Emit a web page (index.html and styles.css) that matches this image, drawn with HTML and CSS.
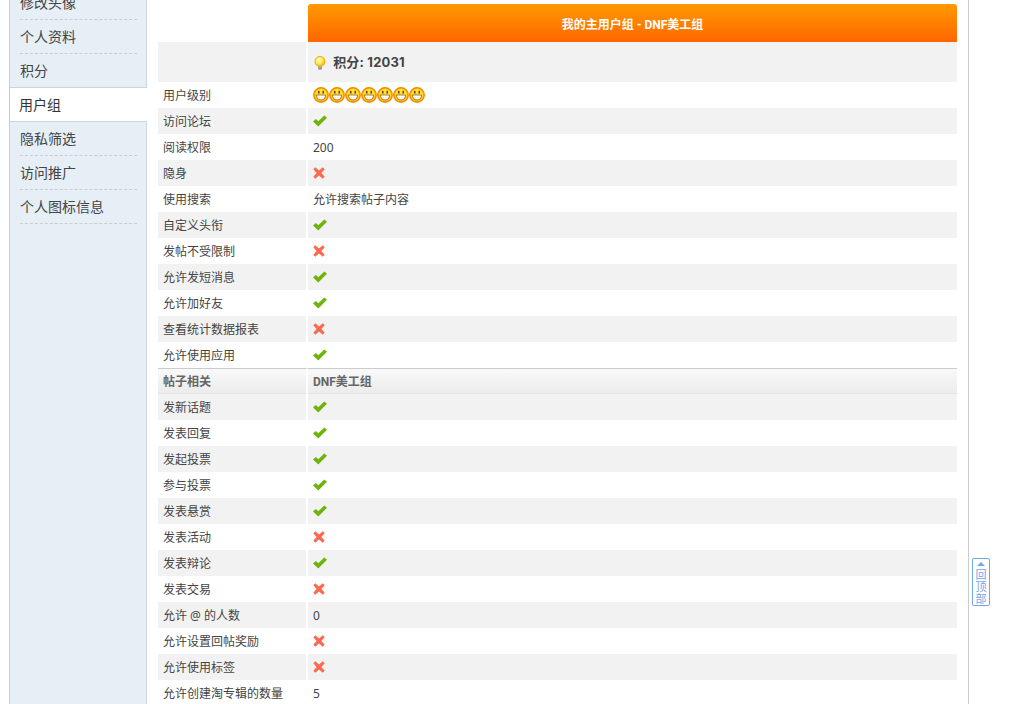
FILE: index.html
```html
<!DOCTYPE html>
<html>
<head>
<meta charset="utf-8">
<title>用户组</title>
<link rel="stylesheet" href="styles.css">
</head>
<body>

<svg class="defs" width="0" height="0">
	<defs>
		<radialGradient id="face" cx="50%" cy="45%" r="55%">
			<stop offset="0.6" stop-color="#ffe23a"/>
			<stop offset="1" stop-color="#ffb000"/>
		</radialGradient>
		<radialGradient id="lamp" cx="40%" cy="35%" r="65%">
			<stop offset="0" stop-color="#fffbd0"/>
			<stop offset="0.6" stop-color="#ffe640"/>
			<stop offset="1" stop-color="#f5b400"/>
		</radialGradient>
		<symbol id="yes" viewBox="0 0 14 12">
			<path d="M0 6.5 L2.8 4 L5.3 6.3 L11.3 0.5 L14 2.8 L5.3 11.5 Z" fill="#6fb30c"/>
		</symbol>
		<symbol id="no" viewBox="0 0 12 12">
			<path d="M2.3 0.3 L6 3.6 L9.7 0.3 L11.7 2.3 L8.4 6 L11.7 9.7 L9.7 11.7 L6 8.4 L2.3 11.7 L0.3 9.7 L3.6 6 L0.3 2.3 Z" fill="#fb6a50"/>
		</symbol>
		<symbol id="smile" viewBox="0 0 16 16">
			<circle cx="8" cy="8" r="7.2" fill="url(#face)" stroke="#f78a00" stroke-width="1.5"/>
			<rect x="5" y="3.8" width="1.5" height="2.8" fill="#6b4200"/>
			<rect x="9.5" y="3.8" width="1.5" height="2.8" fill="#6b4200"/>
			<path d="M3.4 8 H12.6 Q12.2 13 8 13 Q3.8 13 3.4 8 Z" fill="#fff" stroke="#9a6000" stroke-width="0.8"/>
		</symbol>
	</defs>
</svg>

<div class="wrap">
	<div class="side">
		<ul>
			<li>修改头像</li>
			<li>个人资料</li>
			<li class="before-active">积分</li>
			<li class="active">用户组</li>
			<li>隐私筛选</li>
			<li>访问推广</li>
			<li>个人图标信息</li>
		</ul>
	</div>

	<div class="main">
		<div class="title-row">
			<div class="title">我的主用户组 - DNF美工组</div>
		</div>
		<table class="perm">
			<tr class="gray score">
				<td></td>
				<td>
					<svg class="bulb" width="14" height="15" viewBox="0 0 14 15">
						<circle cx="7" cy="5.5" r="5" fill="url(#lamp)" stroke="#e3ad10"/>
						<path d="M5 10.5 H9 V13 Q7 14.8 5 13 Z" fill="#a0a0a0"/>
					</svg>
					<b>积分: 12031</b>
				</td>
			</tr>
			<tr>
				<td>用户级别</td>
				<td class="stars">
					<svg width="16" height="16"><use href="#smile"/></svg><svg width="16" height="16"><use href="#smile"/></svg><svg width="16" height="16"><use href="#smile"/></svg><svg width="16" height="16"><use href="#smile"/></svg><svg width="16" height="16"><use href="#smile"/></svg><svg width="16" height="16"><use href="#smile"/></svg><svg width="16" height="16"><use href="#smile"/></svg>
				</td>
			</tr>
			<tr class="gray"><td>访问论坛</td><td><svg class="ico" width="14" height="12"><use href="#yes"/></svg></td></tr>
			<tr><td>阅读权限</td><td>200</td></tr>
			<tr class="gray"><td>隐身</td><td><svg class="ico" width="12" height="12"><use href="#no"/></svg></td></tr>
			<tr><td>使用搜索</td><td>允许搜索帖子内容</td></tr>
			<tr class="gray"><td>自定义头衔</td><td><svg class="ico" width="14" height="12"><use href="#yes"/></svg></td></tr>
			<tr><td>发帖不受限制</td><td><svg class="ico" width="12" height="12"><use href="#no"/></svg></td></tr>
			<tr class="gray"><td>允许发短消息</td><td><svg class="ico" width="14" height="12"><use href="#yes"/></svg></td></tr>
			<tr><td>允许加好友</td><td><svg class="ico" width="14" height="12"><use href="#yes"/></svg></td></tr>
			<tr class="gray"><td>查看统计数据报表</td><td><svg class="ico" width="12" height="12"><use href="#no"/></svg></td></tr>
			<tr><td>允许使用应用</td><td><svg class="ico" width="14" height="12"><use href="#yes"/></svg></td></tr>
			<tr class="section"><td>帖子相关</td><td>DNF美工组</td></tr>
			<tr class="gray"><td>发新话题</td><td><svg class="ico" width="14" height="12"><use href="#yes"/></svg></td></tr>
			<tr><td>发表回复</td><td><svg class="ico" width="14" height="12"><use href="#yes"/></svg></td></tr>
			<tr class="gray"><td>发起投票</td><td><svg class="ico" width="14" height="12"><use href="#yes"/></svg></td></tr>
			<tr><td>参与投票</td><td><svg class="ico" width="14" height="12"><use href="#yes"/></svg></td></tr>
			<tr class="gray"><td>发表悬赏</td><td><svg class="ico" width="14" height="12"><use href="#yes"/></svg></td></tr>
			<tr><td>发表活动</td><td><svg class="ico" width="12" height="12"><use href="#no"/></svg></td></tr>
			<tr class="gray"><td>发表辩论</td><td><svg class="ico" width="14" height="12"><use href="#yes"/></svg></td></tr>
			<tr><td>发表交易</td><td><svg class="ico" width="12" height="12"><use href="#no"/></svg></td></tr>
			<tr class="gray"><td>允许 @ 的人数</td><td>0</td></tr>
			<tr><td>允许设置回帖奖励</td><td><svg class="ico" width="12" height="12"><use href="#no"/></svg></td></tr>
			<tr class="gray"><td>允许使用标签</td><td><svg class="ico" width="12" height="12"><use href="#no"/></svg></td></tr>
			<tr><td>允许创建淘专辑的数量</td><td>5</td></tr>
		</table>
	</div>
</div>

<a class="totop" href="#"><i></i>回顶部</a>

</body>
</html>
```

FILE: styles.css
```css
html, body {
	margin: 0;
	padding: 0;
	height: 704px;
	overflow: hidden;
	background: #fff;
}

body {
	font-family: "Noto Sans", "Noto Sans CJK SC", sans-serif;
	font-size: 12px;
	color: #444;
}

.defs {
	position: absolute;
}

.wrap {
	display: flex;
	box-sizing: border-box;
	width: 960px;
	height: 704px;
	margin-left: 9px;
	border-left: 1px solid #ccc;
	border-right: 1px solid #ccc;
}

.side {
	box-sizing: border-box;
	width: 137px;
	flex: none;
	background: #e6eef6;
	border-right: 1px solid #ccd8e4;
}

.side ul {
	margin: -14px 0 0;
	padding: 0;
	list-style: none;
}

.side li {
	box-sizing: border-box;
	height: 34px;
	line-height: 33px;
	margin: 0 9px 0 10px;
	font-size: 14px;
	font-family: "Noto Sans CJK SC", sans-serif;
	color: #444;
	border-bottom: 1px dashed #ccc;
}

.side li.before-active {
	height: 33px;
	border-bottom: none;
}

.side li.active {
	position: relative;
	height: 35px;
	margin: 0 -1px 0 0;
	padding-left: 9px;
	background: #fff;
	border-top: 1px solid #ccd3dc;
	border-bottom: 1px solid #ccd3dc;
	color: #333;
}

.main {
	flex: 1;
	padding: 4px 0 0 11px;
}

.title-row {
	padding-left: 150px;
	width: 649px;
}

.title {
	box-sizing: border-box;
	height: 38px;
	padding-top: 2px;
	line-height: 38px;
	text-align: center;
	font-family: Roboto, "Noto Sans CJK SC", sans-serif;
	font-size: 12px;
	font-weight: bold;
	color: #fff;
	border-radius: 3px 3px 0 0;
	background: linear-gradient(#ff9a00, #ff6600);
}

.perm {
	width: 799px;
	border-collapse: separate;
	border-spacing: 0;
	table-layout: fixed;
}

.perm td {
	box-sizing: border-box;
	height: 26px;
	padding: 2px 5px 0;
	line-height: 24px;
	white-space: nowrap;
}

.perm td:first-child {
	width: 150px;
	border-right: 2px solid #fff;
}

.perm .gray td {
	background: #f2f2f2;
}

.perm .score td {
	height: 40px;
	padding-top: 0;
}

.score b {
	margin-left: 3px;
	letter-spacing: 0.2px;
	font-family: Inter, "Noto Sans CJK SC", sans-serif;
	font-size: 13px;
	color: #444;
}

.bulb {
	vertical-align: -4px;
}

.ico {
	display: block;
	margin-top: -2px;
}

.stars svg {
	display: inline-block;
	vertical-align: -3px;
}

.perm .section td {
	padding-top: 2px;
	line-height: 22px;
	font-family: Roboto, "Noto Sans CJK SC", sans-serif;
	font-weight: bold;
	color: #666;
	border-top: 1px solid #ccc;
	border-bottom: 1px solid #e4e4e4;
	background: linear-gradient(#f9f9f9, #ececec);
}

.totop {
	position: absolute;
	left: 972px;
	top: 558px;
	box-sizing: border-box;
	width: 18px;
	height: 48px;
	padding-top: 9px;
	border: 1px solid #6fa8e8;
	border-radius: 2px;
	font-size: 11px;
	line-height: 12px;
	text-align: center;
	color: #6fa8e8;
	text-decoration: none;
	font-family: "Noto Sans CJK SC", sans-serif;
}

.totop i {
	position: absolute;
	left: 4px;
	top: 3px;
	border-left: 4px solid transparent;
	border-right: 4px solid transparent;
	border-bottom: 4px solid #6fa8e8;
}
```
